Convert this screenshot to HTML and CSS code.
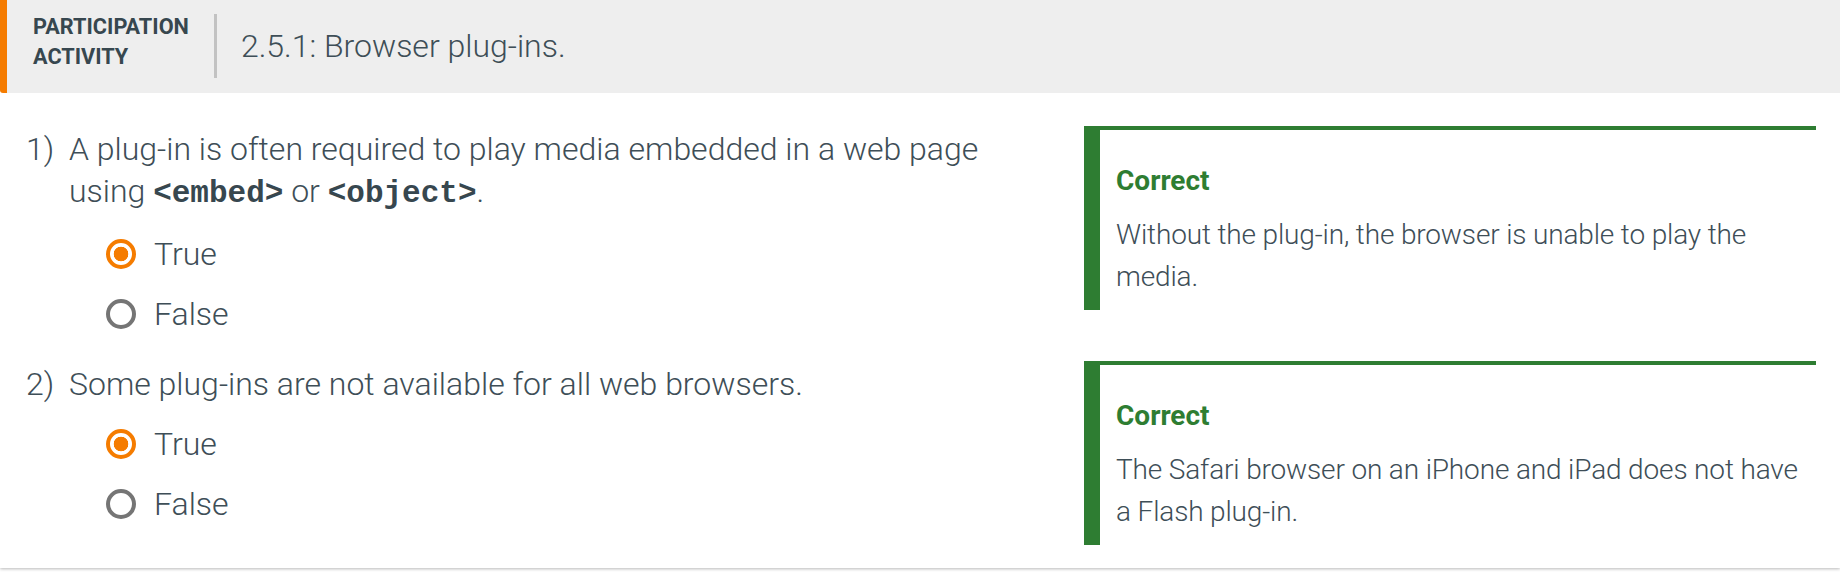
FILE: index.html
```html
<!DOCTYPE html>
<html lang="en">
<head>
<meta charset="utf-8">
<title>Participation Activity 2.5.1</title>
<link rel="stylesheet" href="styles.css">
</head>
<body>
<div class="card">
  <div class="header">
    <div class="label">PARTICIPATION<br>ACTIVITY</div>
    <div class="divider"></div>
    <div class="title">2.5.1: Browser plug-ins.</div>
  </div>
  <div class="content">
    <div class="row">
      <div class="question">
        <div class="prompt">
          <span class="num">1)</span>
          <span class="text">A plug-in is often required to play media embedded in a web page using <code>&lt;embed&gt;</code> or <code>&lt;object&gt;</code>.</span>
        </div>
        <div class="choices">
          <div class="choice"><span class="radio checked"></span><span>True</span></div>
          <div class="choice"><span class="radio"></span><span>False</span></div>
        </div>
      </div>
      <div class="feedback">
        <div class="verdict">Correct</div>
        <div class="explain">Without the plug-in, the browser is unable to play the media.</div>
      </div>
    </div>
    <div class="row">
      <div class="question">
        <div class="prompt">
          <span class="num">2)</span>
          <span class="text">Some plug-ins are not available for all web browsers.</span>
        </div>
        <div class="choices">
          <div class="choice"><span class="radio checked"></span><span>True</span></div>
          <div class="choice"><span class="radio"></span><span>False</span></div>
        </div>
      </div>
      <div class="feedback">
        <div class="verdict">Correct</div>
        <div class="explain">The Safari browser on an iPhone and iPad does not have a Flash plug-in.</div>
      </div>
    </div>
  </div>
</div>
</body>
</html>
```

FILE: styles.css
```css
* { box-sizing: border-box; }
html, body { margin: 0; padding: 0; background: #ffffff; }
body {
  font-family: Roboto, "Noto Sans", sans-serif;
  color: #3e4e57;
  width: 1840px;
  height: 576px;
  overflow: hidden;
}
.card {
  background: #ffffff;
  height: 568px;
  box-shadow: 0 1px 3px rgba(0,0,0,0.28);
}
.header {
  height: 93px;
  background: #eeeeee;
  border-left: 7px solid #f57c00;
  border-bottom-left-radius: 3px;
  display: flex;
  align-items: center;
  padding-left: 26px;
}
.label {
  font-family: Roboto, "Noto Sans", sans-serif;
  font-weight: 700;
  font-size: 21.7px;
  line-height: 30px;
  color: #37474f;
  margin-top: -10px;
}
.divider {
  width: 3px;
  height: 64px;
  background: #c2c2c2;
  margin-left: 25px;
  margin-right: 24px;
  margin-top: -2px;
}
.title {
  font-family: "Roboto Light", Roboto, "Noto Sans", sans-serif;
  font-weight: 300;
  font-size: 32px;
  margin-top: -2px;
}
.content {
  padding: 33px 24px 0 26px;
  display: flex;
  flex-direction: column;
  gap: 26px;
}
.row {
  display: grid;
  grid-template-columns: 1fr 732px;
  column-gap: 60px;
  align-items: start;
}
.question {
  padding-top: 2px;
  font-family: "Roboto Light", Roboto, "Noto Sans", sans-serif;
  font-weight: 300;
  font-size: 32px;
  line-height: 42px;
}
.prompt { display: flex; }
.num { width: 43px; flex: none; }
.text { flex: 1; }
code {
  font-family: "Liberation Mono", "DejaVu Sans Mono", monospace;
  font-weight: 700;
  font-size: 31px;
  color: #37474f;
}
.choices {
  margin-left: 80px;
}
.choice {
  display: flex;
  align-items: center;
  height: 42px;
  margin-top: 18px;
}
.radio {
  width: 30px;
  height: 30px;
  border-radius: 50%;
  border: 4px solid #757575;
  margin-right: 18px;
  flex: none;
}
.radio.checked {
  border-color: #f57c00;
  background: radial-gradient(circle, #f57c00 0 7px, #ffffff 7.6px);
}
.feedback {
  border-top: 4px solid #2e7d32;
  border-left: 16px solid #2e7d32;
  padding: 30px 0 12px 16px;
  font-size: 28px;
  line-height: 42px;
}
.verdict {
  font-family: Roboto, "Noto Sans", sans-serif;
  font-weight: 700;
  color: #2e7d32;
}
.explain {
  font-family: "Roboto Light", Roboto, "Noto Sans", sans-serif;
  font-weight: 300;
  letter-spacing: -0.15px;
  margin-top: 12px;
}
```
